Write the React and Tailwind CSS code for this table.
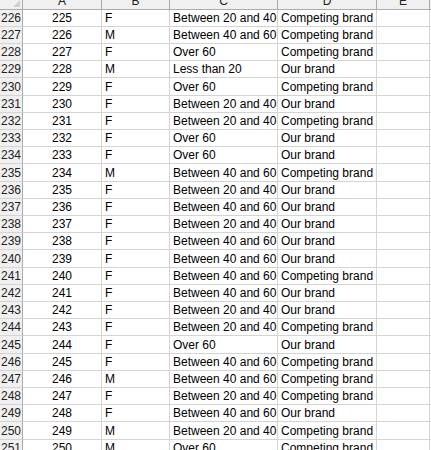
const rows = [
  [226, 225, 'F', 'Between 20 and 40', 'Competing brand'],
  [227, 226, 'M', 'Between 40 and 60', 'Competing brand'],
  [228, 227, 'F', 'Over 60', 'Competing brand'],
  [229, 228, 'M', 'Less than 20', 'Our brand'],
  [230, 229, 'F', 'Over 60', 'Competing brand'],
  [231, 230, 'F', 'Between 20 and 40', 'Our brand'],
  [232, 231, 'F', 'Between 20 and 40', 'Competing brand'],
  [233, 232, 'F', 'Over 60', 'Our brand'],
  [234, 233, 'F', 'Over 60', 'Our brand'],
  [235, 234, 'M', 'Between 40 and 60', 'Competing brand'],
  [236, 235, 'F', 'Between 20 and 40', 'Our brand'],
  [237, 236, 'F', 'Between 40 and 60', 'Our brand'],
  [238, 237, 'F', 'Between 20 and 40', 'Our brand'],
  [239, 238, 'F', 'Between 40 and 60', 'Our brand'],
  [240, 239, 'F', 'Between 40 and 60', 'Our brand'],
  [241, 240, 'F', 'Between 40 and 60', 'Competing brand'],
  [242, 241, 'F', 'Between 40 and 60', 'Our brand'],
  [243, 242, 'F', 'Between 20 and 40', 'Our brand'],
  [244, 243, 'F', 'Between 20 and 40', 'Competing brand'],
  [245, 244, 'F', 'Over 60', 'Our brand'],
  [246, 245, 'F', 'Between 40 and 60', 'Competing brand'],
  [247, 246, 'M', 'Between 40 and 60', 'Competing brand'],
  [248, 247, 'F', 'Between 20 and 40', 'Competing brand'],
  [249, 248, 'F', 'Between 40 and 60', 'Our brand'],
  [250, 249, 'M', 'Between 20 and 40', 'Competing brand'],
  [251, 250, 'M', 'Over 60', 'Competing brand'],
];

const cols = "grid grid-cols-[23px_79px_68px_108px_99px_53px_1fr]";
const cell = "border-r border-b border-[#d4d4d4] flex items-end pb-[2px] overflow-hidden whitespace-nowrap";
const hdr = "bg-[#f0f0f0] border-r border-b border-[#ababab] flex items-end justify-center overflow-hidden text-[#222]";

export default function App() {
  return (
    <div className="w-[431px] h-[450px] overflow-hidden bg-white text-[12px] leading-none text-black" style={{ fontFamily: '"Liberation Sans", Arial, sans-serif' }}>
      {/* column headers */}
      <div className={`${cols} h-[10px]`}>
        <div className="bg-[#f0f0f0] border-r border-b border-[#ababab] relative">
          <div className="absolute right-[2px] bottom-[2px] w-0 h-0 border-l-[7px] border-l-transparent border-b-[7px] border-b-[#cfcfcf]" />
        </div>
        {['A', 'B', 'C', 'D', 'E'].map((c) => (
          <div key={c} className={hdr}>
            <span className="pb-[2px]">{c}</span>
          </div>
        ))}
        <div className="bg-[#f0f0f0] border-b border-[#ababab]" />
      </div>

      {/* data rows */}
      {rows.map(([n, a, b, c, d], i) => (
        <div key={n} className={`${cols} ${i % 5 === 4 ? 'h-[18px]' : 'h-[17px]'}`}>
          <div className="bg-[#f0f0f0] border-r border-[#ababab] border-b border-b-[#d4d4d4] flex items-end justify-center pb-[2px] overflow-hidden text-[#222]">{n}</div>
          <div className={`${cell} justify-center`}>{a}</div>
          <div className={`${cell} pl-[3px]`}>{b}</div>
          <div className={`${cell} pl-[3px]`}>{c}</div>
          <div className={`${cell} pl-[3px]`}>{d}</div>
          <div className={cell} />
          <div className="border-b border-[#d4d4d4]" />
        </div>
      ))}
    </div>
  );
}
